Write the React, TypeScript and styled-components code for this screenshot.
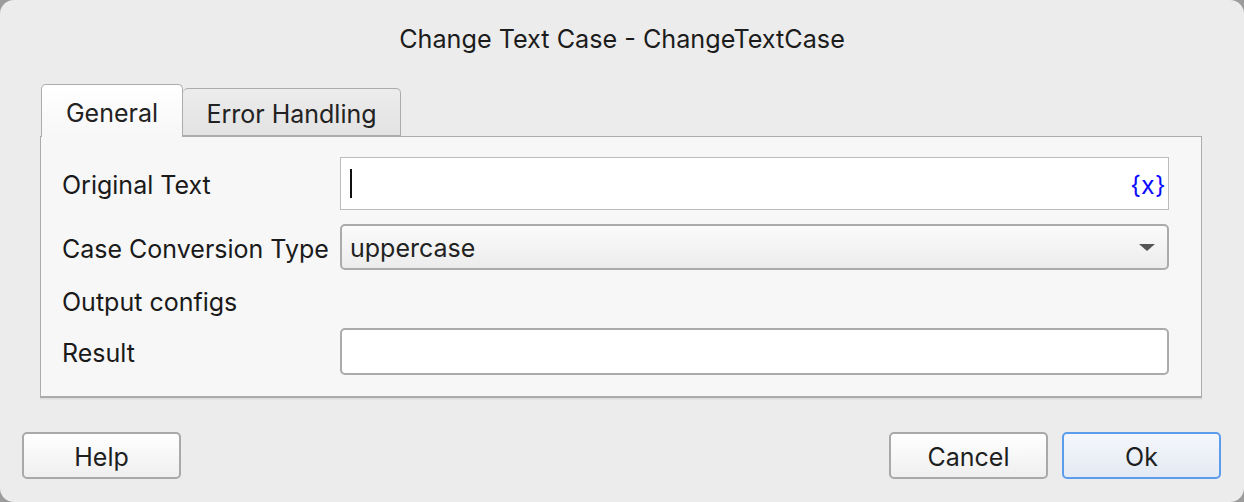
import React from "react";
import styled, { createGlobalStyle } from "styled-components";

const Global = createGlobalStyle`
  html, body { margin: 0; padding: 0; background: #9c9c9c; }
  body { font-family: Inter, "Liberation Sans", sans-serif; }
  * { box-sizing: border-box; }
`;

const Window = styled.div`
  width: 1244px;
  height: 502px;
  background: #ececec;
  border-radius: 14px;
  display: flex;
  flex-direction: column;
  overflow: hidden;
  color: #1e1e1e;
  font-size: 25px;
`;

const Title = styled.div`
  height: 30px;
  margin-top: 24px;
  line-height: 30px;
  text-align: center;
  font-size: 25.2px;
  color: #1c1c1c;
`;

const TabBar = styled.div`
  margin: 30px 0 0 41px;
  height: 52px;
  display: flex;
  align-items: flex-end;
  position: relative;
  z-index: 1;
`;

const Tab = styled.div<{ $active?: boolean }>`
  height: ${(p) => (p.$active ? "53px" : "48px")};
  margin-bottom: ${(p) => (p.$active ? "-1px" : "0")};
  width: ${(p) => (p.$active ? "142px" : "218px")};
  border: 1.5px solid #acacac;
  border-bottom: ${(p) => (p.$active ? "none" : "1.5px solid #acacac")};
  border-left: ${(p) => (p.$active ? "1.5px solid #acacac" : "none")};
  border-radius: 5px 5px 0 0;
  background: ${(p) =>
    p.$active
      ? "linear-gradient(#ffffff, #f7f7f7)"
      : "linear-gradient(#ececec, #e3e3e3)"};
  display: flex;
  align-items: center;
  justify-content: center;
  padding-top: ${(p) => (p.$active ? "3px" : "4px")};
  font-size: 25px;
  color: #222;
`;

const Panel = styled.div`
  margin: 0 42px 0 40px;
  height: 262px;
  background: #f7f7f7;
  border: 1.5px solid #acacac;
  border-bottom-width: 2px;
  box-shadow: 0 1.5px 0 #dcdcdc;
  padding: 20px 32px 0 21px;
  display: flex;
  flex-direction: column;
  gap: 14px;
`;

const Row = styled.div<{ $h: number }>`
  height: ${(p) => p.$h}px;
  display: grid;
  grid-template-columns: 278px 1fr;
  align-items: center;
`;

const Label = styled.div`
  font-size: 25px;
  color: #1a1a1a;
  white-space: nowrap;
  padding-top: 3px;
`;

const TextField = styled.div`
  height: 100%;
  background: #ffffff;
  border: 1.5px solid #bcbcbc;
  display: flex;
  align-items: center;
  justify-content: space-between;
  padding: 0 2px 0 9px;
`;

const Caret = styled.div`
  width: 2px;
  height: 29px;
  background: #111;
`;

const VarBadge = styled.span`
  color: #0a0aff;
  font-size: 25px;
  padding-top: 2px;
  letter-spacing: 0.3px;
`;

const Select = styled.div`
  height: 100%;
  background: linear-gradient(#fbfbfb, #ececec);
  border: 2px solid #ababab;
  border-radius: 5px;
  display: flex;
  align-items: center;
  justify-content: space-between;
  padding: 2px 12px 0 8px;
  font-size: 25px;
  color: #222;
`;

const Arrow = styled.div`
  width: 0;
  height: 0;
  margin-bottom: 2px;
  border-left: 8px solid transparent;
  border-right: 8px solid transparent;
  border-top: 7px solid #555;
`;

const RoundField = styled.div`
  height: 100%;
  background: #ffffff;
  border: 2px solid #ababab;
  border-radius: 5px;
`;

const Footer = styled.div`
  margin-top: 34px;
  padding: 0 23px 0 22px;
  display: flex;
  align-items: center;
  gap: 14px;
`;

const Spacer = styled.div`
  flex: 1;
`;

const Button = styled.button<{ $primary?: boolean }>`
  width: 159px;
  height: 47px;
  border-radius: 5px;
  border: ${(p) => (p.$primary ? "2px solid #5b9cec" : "2px solid #a9a9a9")};
  background: ${(p) =>
    p.$primary
      ? "linear-gradient(#f4f7fb, #e4eaf3)"
      : "linear-gradient(#ffffff, #efefef)"};
  font-family: Inter, "Liberation Sans", sans-serif;
  font-size: 25px;
  color: #1e1e1e;
  padding: 3px 0 0;
`;

export default function App() {
  return (
    <>
      <Global />
      <Window>
        <Title>Change Text Case - ChangeTextCase</Title>
        <TabBar>
          <Tab $active>General</Tab>
          <Tab>Error Handling</Tab>
        </TabBar>
        <Panel>
          <Row $h={53}>
            <Label>Original Text</Label>
            <TextField>
              <Caret />
              <VarBadge>{"{x}"}</VarBadge>
            </TextField>
          </Row>
          <Row $h={46}>
            <Label>Case Conversion Type</Label>
            <Select>
              <span>uppercase</span>
              <Arrow />
            </Select>
          </Row>
          <Row $h={30}>
            <Label>Output configs</Label>
          </Row>
          <Row $h={47}>
            <Label>Result</Label>
            <RoundField />
          </Row>
        </Panel>
        <Footer>
          <Button>Help</Button>
          <Spacer />
          <Button>Cancel</Button>
          <Button $primary>Ok</Button>
        </Footer>
      </Window>
    </>
  );
}
